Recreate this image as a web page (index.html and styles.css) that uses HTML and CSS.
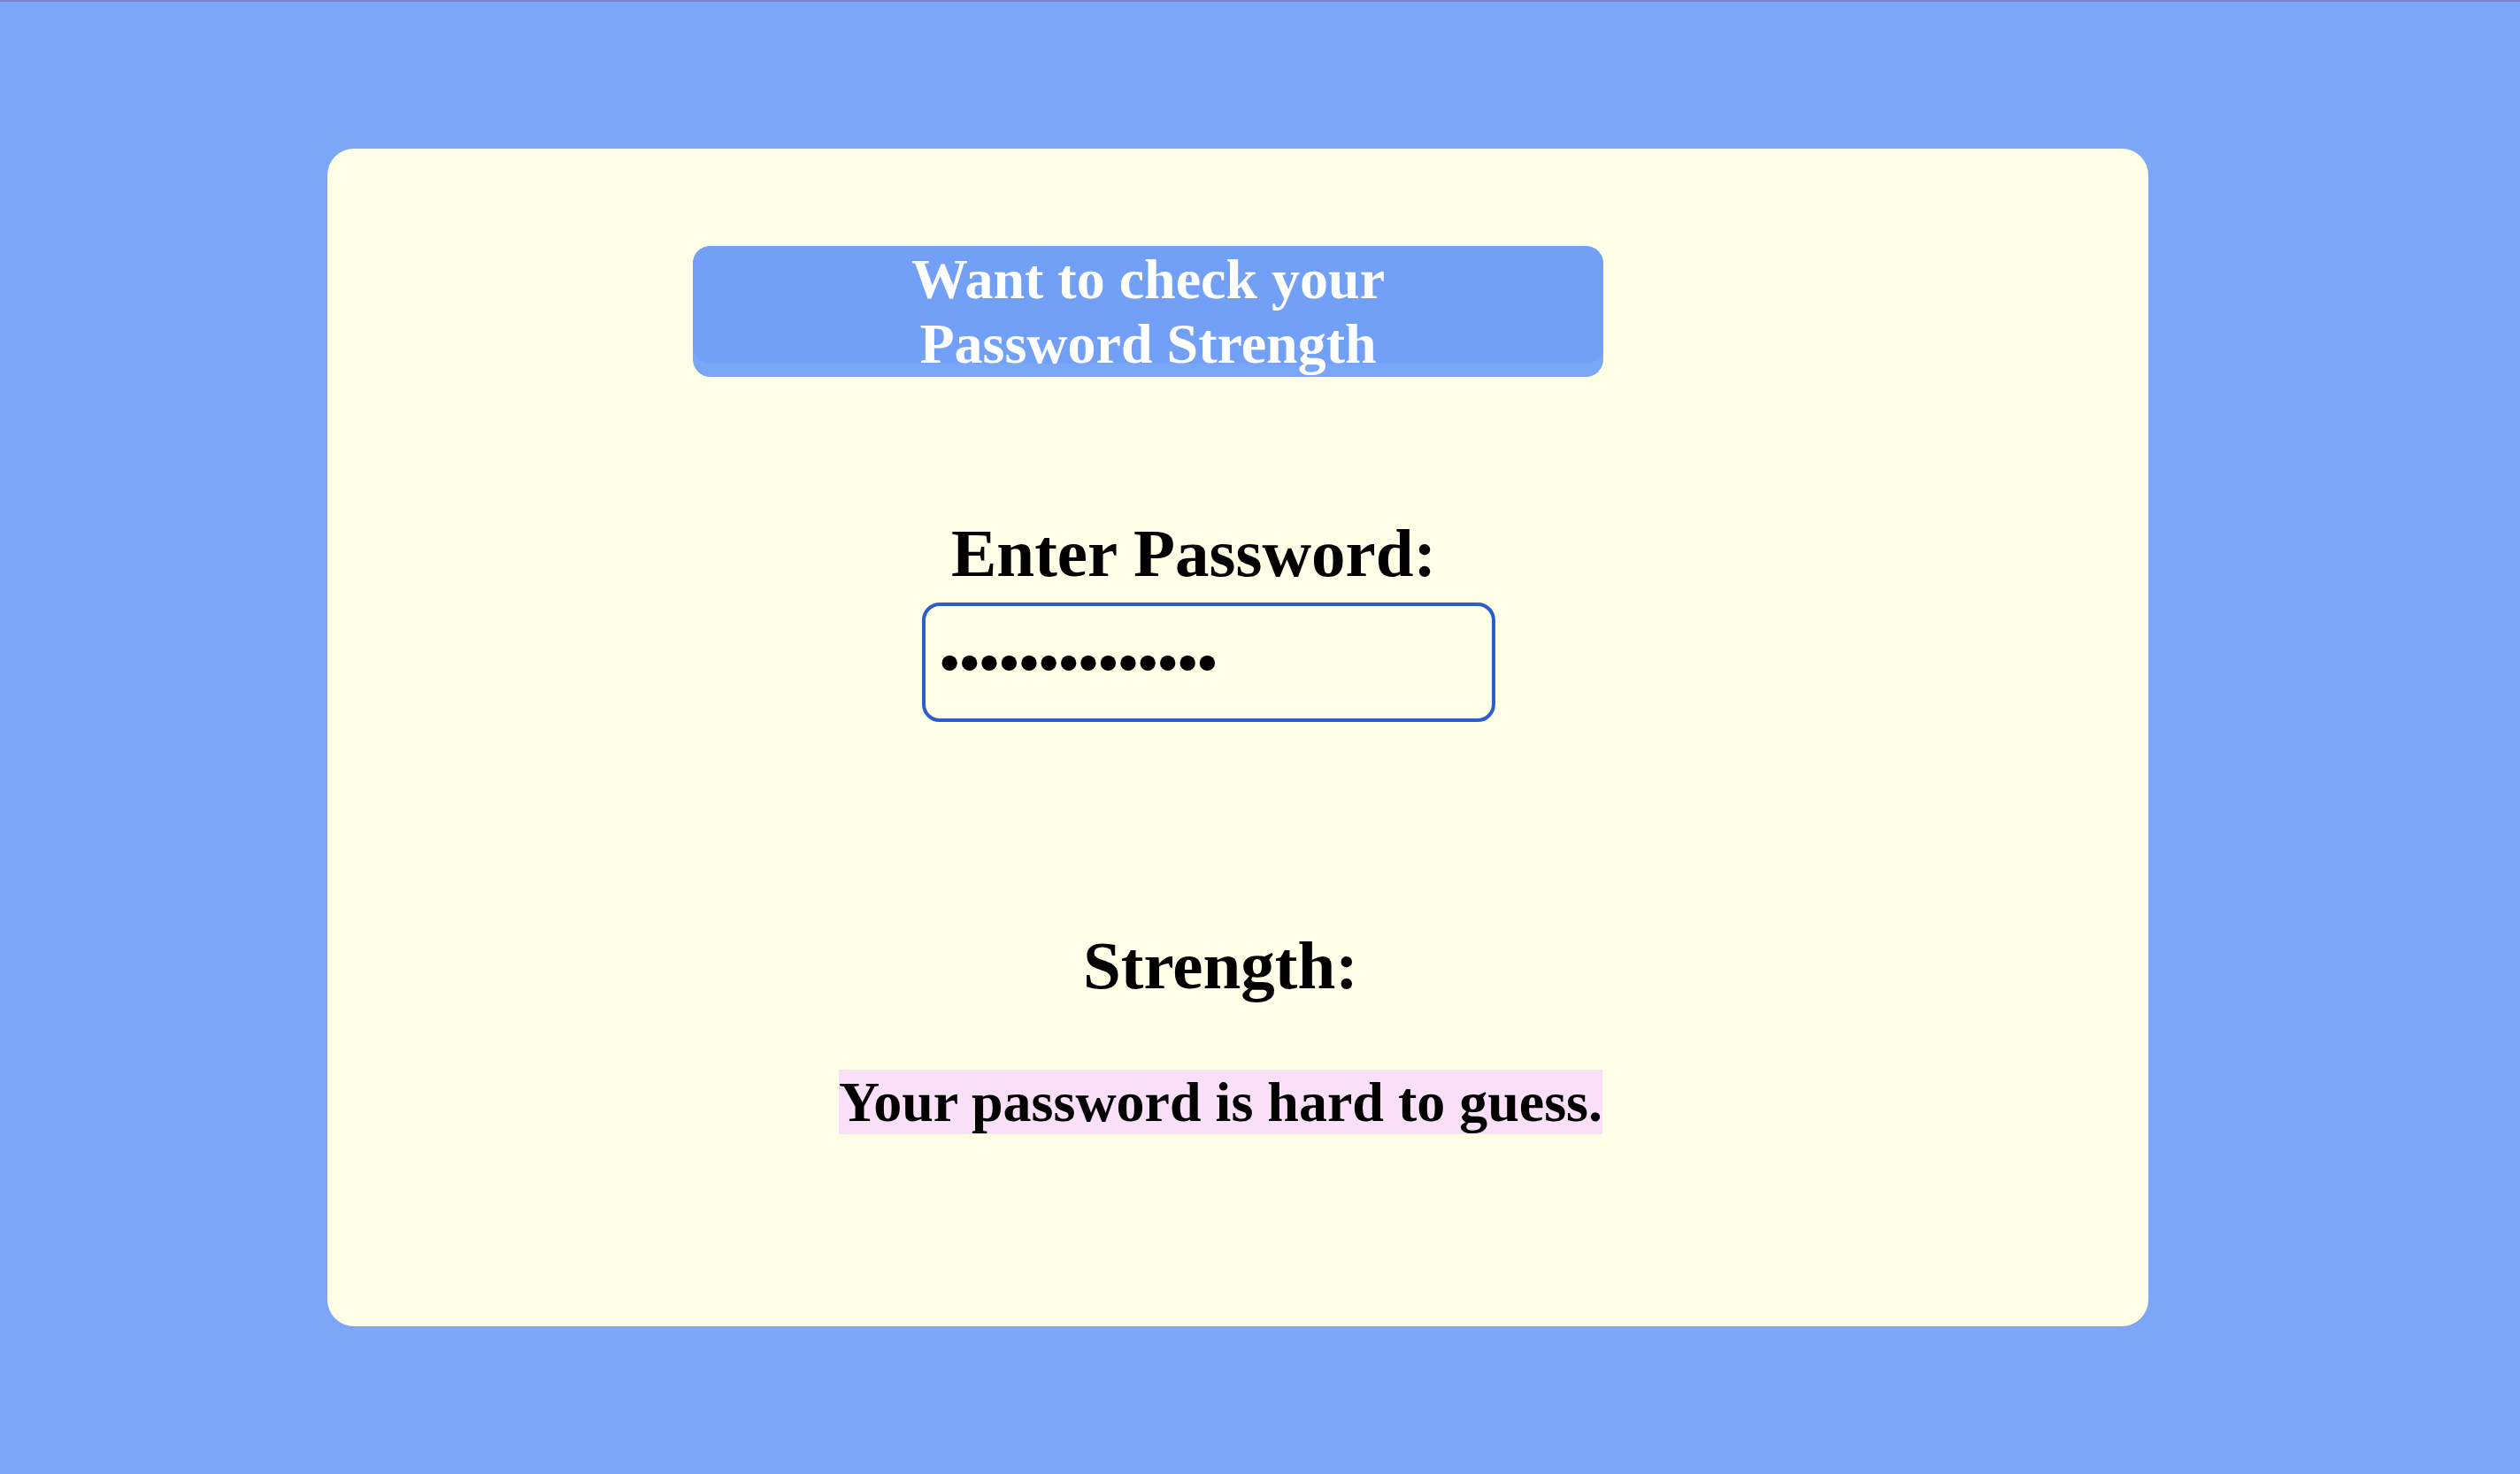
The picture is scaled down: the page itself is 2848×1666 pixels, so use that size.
FILE: index.html
```html
<!DOCTYPE html>
<html lang="en">
<head>
<meta charset="utf-8">
<title>Password Strength</title>
<link rel="stylesheet" href="styles.css">
</head>
<body>
  <main class="card">
    <div class="banner">
      <h1 class="banner-title">Want to check your<br>Password Strength</h1>
    </div>
    <label class="label" for="pw">Enter Password:</label>
    <input class="pw" id="pw" type="password" value="abcdefghijklmn">
    <h2 class="strength">Strength:</h2>
    <div class="result-row"><span class="result">Your password is hard to guess.</span></div>
  </main>
</body>
</html>
```
FILE: styles.css
```css
html, body {
  margin: 0;
  padding: 0;
}
body {
  background: #7ca7f7;
  border-top: 2px solid #8a7ac4;
  font-family: "Liberation Serif", "Times New Roman", serif;
  min-height: 1664px;
}
.card {
  display: block;
  margin: 166px 0 0 370px;
  width: 2058px;
  height: 1331px;
  box-sizing: border-box;
  padding-top: 110px;
  background: #fffee6;
  border-radius: 30px;
  overflow: hidden;
}
.banner {
  margin-left: 413px;
  width: 1029px;
  height: 148px;
  background: #7aa6f6;
  border-radius: 20px;
}
.banner-title {
  margin: 0;
  height: 133px;
  box-sizing: border-box;
  padding-top: 1px;
  background: #73a0f7;
  border-radius: 20px;
  color: #ffffff;
  font-size: 64px;
  line-height: 73px;
  font-weight: bold;
  text-align: center;
}
.label {
  display: block;
  margin: 155px 0 0 705px;
  font-size: 77px;
  line-height: 88px;
  font-weight: bold;
  color: #000;
}
.pw {
  display: block;
  margin: 12px 0 0 672px;
  width: 648px;
  height: 135px;
  box-sizing: border-box;
  border: 4px solid #2b5ecb;
  border-radius: 20px;
  background: transparent;
  padding: 0 16px;
  font-family: "Liberation Serif", "Times New Roman", serif;
  font-size: 64px;
  font-weight: bold;
  color: #000;
  outline: none;
}
.strength {
  margin: 231px 0 0 854px;
  font-size: 77px;
  line-height: 88px;
  font-weight: bold;
  color: #000;
}
.result-row {
  margin: 74px 0 0 578px;
}
.result {
  display: inline-block;
  font-size: 64px;
  line-height: 73px;
  font-weight: bold;
  background: #f9dff7;
  color: #000;
}
```
